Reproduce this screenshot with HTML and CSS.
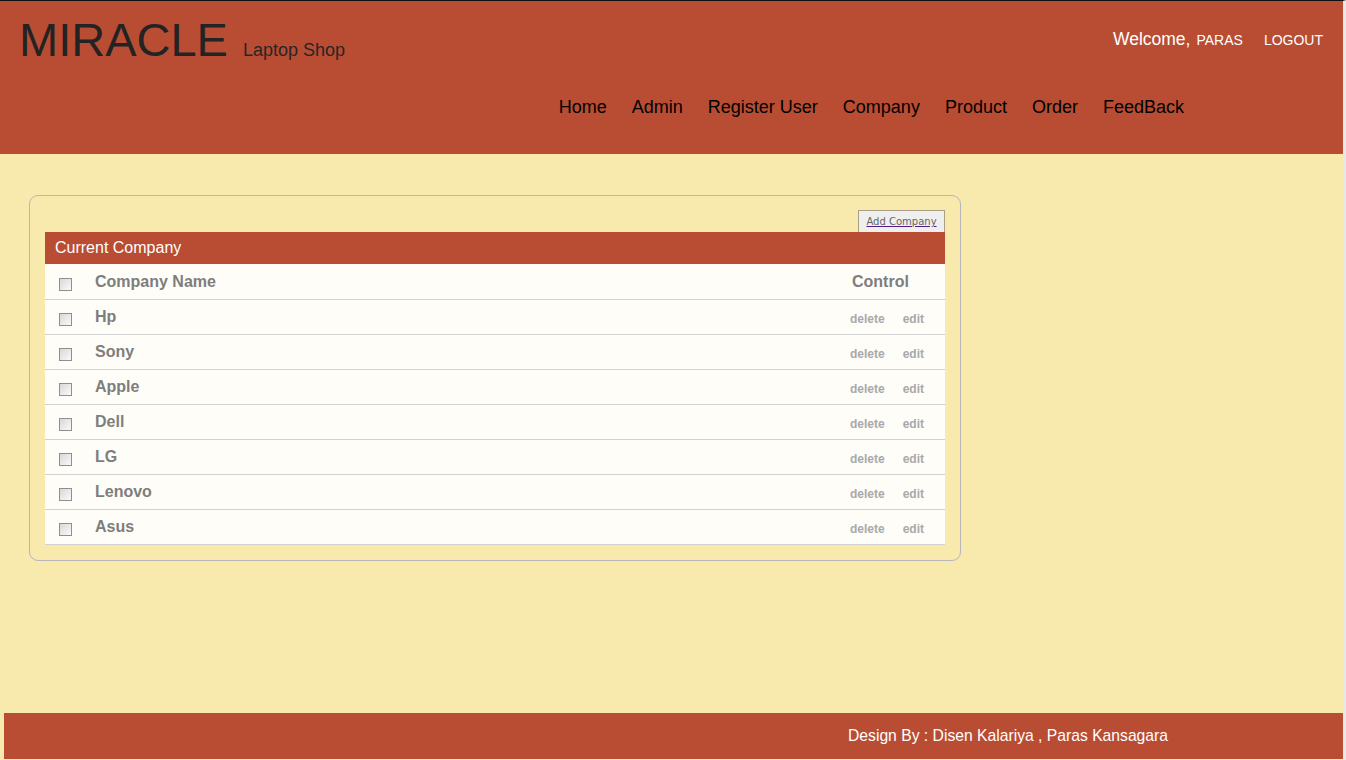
FILE: index.html
```html
<!DOCTYPE html>
<html>
<head>
<meta charset="utf-8">
<title>Miracle Laptop Shop</title>
<link rel="stylesheet" href="styles.css">
</head>
<body>
<div class="page">
  <header class="header">
    <div class="top-row">
      <div class="brand"><span class="logo">MIRACLE</span><span class="tagline">Laptop Shop</span></div>
      <div class="user"><span class="welcome">Welcome,</span><span class="uname">PARAS</span><a class="logout">LOGOUT</a></div>
    </div>
    <nav class="nav">
      <a>Home</a><a>Admin</a><a>Register User</a><a>Company</a><a>Product</a><a>Order</a><a>FeedBack</a>
    </nav>
  </header>
  <main class="main">
    <section class="panel">
      <div class="panel-tools"><button class="add-btn"><span>Add Company</span></button></div>
      <div class="table-title">Current Company</div>
      <div class="table">
        <div class="row head"><span class="cb"></span><span class="name">Company Name</span><span class="ctrl-head">Control</span></div>
        <div class="row"><span class="cb"></span><span class="name">Hp</span><span class="ctrl"><a>delete</a><a>edit</a></span></div>
        <div class="row"><span class="cb"></span><span class="name">Sony</span><span class="ctrl"><a>delete</a><a>edit</a></span></div>
        <div class="row"><span class="cb"></span><span class="name">Apple</span><span class="ctrl"><a>delete</a><a>edit</a></span></div>
        <div class="row"><span class="cb"></span><span class="name">Dell</span><span class="ctrl"><a>delete</a><a>edit</a></span></div>
        <div class="row"><span class="cb"></span><span class="name">LG</span><span class="ctrl"><a>delete</a><a>edit</a></span></div>
        <div class="row"><span class="cb"></span><span class="name">Lenovo</span><span class="ctrl"><a>delete</a><a>edit</a></span></div>
        <div class="row"><span class="cb"></span><span class="name">Asus</span><span class="ctrl"><a>delete</a><a>edit</a></span></div>
      </div>
    </section>
  </main>
  <footer class="footer">Design By : Disen Kalariya , Paras Kansagara</footer>
</div>
</body>
</html>
```
FILE: styles.css
```css
html, body { margin: 0; padding: 0; }
body {
  font-family: "Liberation Sans", Arial, sans-serif;
  background: #f8eaad;
  height: 760px;
  overflow: hidden;
}
.page {
  display: flex;
  flex-direction: column;
  height: 760px;
  border-top: 1px solid #111;
  box-sizing: border-box;
  border-right: 3px solid #e8e8e8;
}
.header {
  background: #b94d33;
  height: 153px;
  display: flex;
  flex-direction: column;
}
.top-row {
  display: flex;
  justify-content: space-between;
  align-items: flex-start;
  height: 84px;
}
.brand {
  padding: 14px 0 0 19px;
  display: flex;
  align-items: baseline;
}
.logo {
  font-size: 47px;
  color: #232323;
  line-height: 50px;
}
.tagline {
  font-size: 18px;
  color: #262626;
  margin-left: 15px;
}
.user {
  padding: 28px 20px 0 0;
  display: flex;
  align-items: baseline;
  color: #fff;
}
.welcome { font-size: 17.5px; }
.uname { font-size: 14px; margin-left: 6px; }
.logout { font-size: 14px; margin-left: 21px; }
.nav {
  display: flex;
  justify-content: flex-end;
  gap: 25px;
  padding-right: 159px;
  margin-top: 12px;
}
.nav a {
  font-size: 18px;
  color: #000;
  line-height: 20px;
}
.main {
  flex: 1;
  padding: 41px 0 0 29px;
}
.panel {
  width: 900px;
  border: 1px solid #b6b6bb;
  border-radius: 9px;
  padding: 14px 15px 15px 15px;
  box-sizing: content-box;
}
.panel-tools {
  display: flex;
  justify-content: flex-end;
}
.add-btn {
  font-family: "DejaVu Sans", Verdana, sans-serif;
  font-size: 10px;
  background: #efefef;
  border: 1px solid #ab9f86;
  border-bottom: none;
  height: 22px;
  width: 87px;
  padding: 0;
  color: #666;
  margin-right: 0;
}
.add-btn span {
  text-decoration: underline;
  text-decoration-color: #551a8b;
}
.table-title {
  background: #b94d33;
  color: #fff;
  font-size: 16px;
  height: 32px;
  line-height: 32px;
  padding-left: 10px;
}
.table { background: #fefdf8; }
.row {
  display: flex;
  align-items: center;
  height: 34px;
  border-bottom: 1px solid #d2d2d2;
}
.row.head { height: 35px; }
.cb {
  width: 11px;
  height: 11px;
  margin-left: 14px;
  margin-top: 5px;
  border: 1px solid #8f8f8f;
  background: linear-gradient(135deg, #d8d8d8, #fafafa);
  flex: none;
}
.name {
  margin-left: 23px;
  font-size: 16px;
  font-weight: bold;
  color: #7e7e7e;
  flex: 1;
}
.ctrl-head {
  font-size: 16px;
  font-weight: bold;
  color: #7e7e7e;
  width: 93px;
}
.ctrl {
  width: 95px;
  display: flex;
  gap: 18px;
  font-size: 12px;
  font-weight: bold;
  color: #a9a9a9;
  padding-top: 3px;
}
.footer {
  margin-left: 4px;
  margin-bottom: 1px;
  height: 46px;
  background: #b94d33;
  color: #fff;
  font-size: 15.7px;
  line-height: 46px;
  padding-left: 844px;
}
```
